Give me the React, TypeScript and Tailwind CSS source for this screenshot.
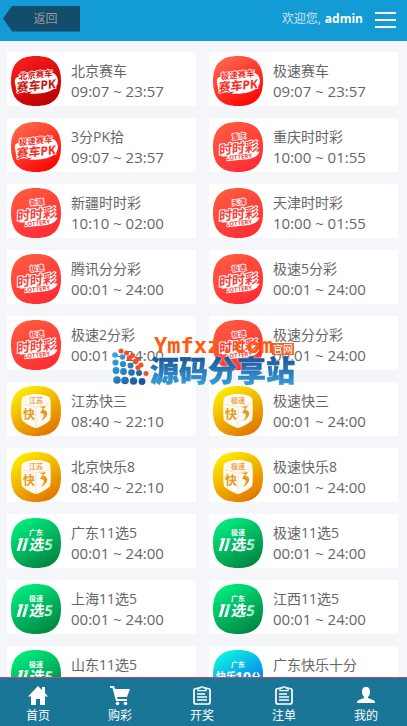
import React from 'react';

type Kind = 'pk' | 'pkDark' | 'ssc' | 'k3' | 'x5' | 'kl10';

interface Lottery {
  name: string;
  time: string;
  kind: Kind;
  label: string;
}

const lotteries: Lottery[] = [
  { name: '北京赛车', time: '09:07 ~ 23:57', kind: 'pkDark', label: '北京赛车' },
  { name: '极速赛车', time: '09:07 ~ 23:57', kind: 'pk', label: '极速赛车' },
  { name: '3分PK拾', time: '09:07 ~ 23:57', kind: 'pk', label: '极速赛车' },
  { name: '重庆时时彩', time: '10:00 ~ 01:55', kind: 'ssc', label: '重庆' },
  { name: '新疆时时彩', time: '10:10 ~ 02:00', kind: 'ssc', label: '新疆' },
  { name: '天津时时彩', time: '10:00 ~ 01:55', kind: 'ssc', label: '天津' },
  { name: '腾讯分分彩', time: '00:01 ~ 24:00', kind: 'ssc', label: '极速' },
  { name: '极速5分彩', time: '00:01 ~ 24:00', kind: 'ssc', label: '极速' },
  { name: '极速2分彩', time: '00:01 ~ 24:00', kind: 'ssc', label: '极速' },
  { name: '极速分分彩', time: '00:01 ~ 24:00', kind: 'ssc', label: '极速' },
  { name: '江苏快三', time: '08:40 ~ 22:10', kind: 'k3', label: '江苏' },
  { name: '极速快三', time: '00:01 ~ 24:00', kind: 'k3', label: '极速' },
  { name: '北京快乐8', time: '08:40 ~ 22:10', kind: 'k3', label: '江苏' },
  { name: '极速快乐8', time: '00:01 ~ 24:00', kind: 'k3', label: '极速' },
  { name: '广东11选5', time: '00:01 ~ 24:00', kind: 'x5', label: '广东' },
  { name: '极速11选5', time: '00:01 ~ 24:00', kind: 'x5', label: '极速' },
  { name: '上海11选5', time: '00:01 ~ 24:00', kind: 'x5', label: '极速' },
  { name: '江西11选5', time: '00:01 ~ 24:00', kind: 'x5', label: '广东' },
  { name: '山东11选5', time: '00:01 ~ 24:00', kind: 'x5', label: '极速' },
  { name: '广东快乐十分', time: '00:01 ~ 24:00', kind: 'kl10', label: '广东' },
];

const gradients: Record<Kind, [string, string]> = {
  pkDark: ['#fb1d1d', '#b80000'],
  pk: ['#ff6a50', '#ff0000'],
  ssc: ['#ff5c40', '#ff2a34'],
  k3: ['#fff000', '#e07000'],
  x5: ['#00f080', '#008040'],
  kl10: ['#10f8e0', '#0060f0'],
};

const squircle = 'M25 0C42 0 50 8 50 25S42 50 25 50 0 42 0 25 8 0 25 0Z';

const LotteryIcon: React.FC<{ kind: Kind; label: string }> = ({ kind, label }) => {
  const [from, to] = gradients[kind];
  const red = kind === 'pkDark' ? '#d01010' : '#fa2a22';

  return (
    <svg viewBox="0 0 50 50" className="h-[50px] w-[50px] shrink-0 font-bold" textAnchor="middle" aria-hidden="true">
      <defs>
        <linearGradient id={`fill-${kind}`} x1="0.2" y1="0" x2="0.8" y2="1">
          <stop offset="0" stopColor={from} />
          <stop offset="1" stopColor={to} />
        </linearGradient>
        <linearGradient id="fade" x1="0" y1="0" x2="1" y2="0">
          <stop offset="0" stopColor="#fff" />
          <stop offset="0.6" stopColor="#fff" />
          <stop offset="1" stopColor="#7fe0a8" />
        </linearGradient>
      </defs>
      <path d={squircle} fill={`url(#fill-${kind})`} />

      {(kind === 'pk' || kind === 'pkDark') && (
        <g transform="rotate(-6 25 25)" fill={red} stroke="#fff" paintOrder="stroke" strokeLinejoin="round">
          <path d="M4 26C3 18 8 20 10 18H40C48 19 49 30 43 34 36 39 24 38 17 37L20 35H5Z" fill="#fff" stroke="none" />
          <text x="28" y="22" fontSize="8.500" strokeWidth="1.500" transform="skewX(-8)">{label}</text>
          <text x="29" y="34" fontSize="12" strokeWidth="1.500" transform="skewX(-8)">赛车PK</text>
        </g>
      )}

      {kind === 'ssc' && (
        <g transform="rotate(-6 25 25)" fill="#fc4038" stroke="#fff" paintOrder="stroke" strokeLinejoin="round">
          <path d="M8 22H44L42 31 46 32C43 37 39 37 35 38H12V33H8Z" fill="#fff" stroke="none" />
          <text x="27" y="17" fontSize="7" strokeWidth="1.500">{label}</text>
          <text x="29" y="31" fontSize="13" strokeWidth="2" transform="skewX(-8)">时时彩</text>
          <text x="25" y="37" fontSize="6" stroke="none">LOTTERY</text>
        </g>
      )}

      {kind === 'k3' && (
        <g>
          <path d="M25 8C31 8 38 10 39 12S40 32 39 34 28 42 25 42 12 36 11 34 10 14 11 12 19 8 25 8Z" fill="#fffaf2" />
          <path d="M12 18L25 21 38 18M25 21V42" fill="none" stroke="#fbe4c8" />
          <text x="25" y="17" fontSize="7" fill="#f0a050">{label}</text>
          <text x="18" y="33" fontSize="12" fill="#e59a18">快</text>
          <path d="M28 21L35 20 32 24C38 24 38 31 30 35 34 30 34 27 29 27L32 22Z" fill="#e59a18" />
        </g>
      )}

      {kind === 'x5' && (
        <g fill="#fff">
          <text x="25" y="17" fontSize="7">{label}</text>
          <g fill="url(#fade)">
            <path d="M9 20H12.500L8.500 33H5.500L8.700 22H7ZM15 20H18L14 33H11L14.300 22H13Z" />
            <text x="35" y="32" fontSize="15" transform="skewX(-10)">选5</text>
          </g>
        </g>
      )}

      {kind === 'kl10' && (
        <g fill="#fff">
          <text x="25" y="17" fontSize="7">{label}</text>
          <text x="13" y="30" fontSize="10">快乐</text>
          <text x="30" y="32" fontSize="14">10</text>
          <text x="43" y="30" fontSize="9">分</text>
        </g>
      )}
    </svg>
  );
};

const HomeIcon = () => (
  <svg viewBox="0 0 20 20" className="h-5 w-5" fill="currentColor" aria-hidden="true">
    <path d="M10 0L0 10.500H3V19H8V13H12V19H17V10.500H20L17 7V1H14V4Z" />
  </svg>
);

const CartIcon = () => (
  <svg viewBox="0 0 20 20" className="h-5 w-5" fill="currentColor" aria-hidden="true">
    <path d="M0 0H4L5 3H20L17 11H7L7.500 13H17V15H6L2.500 2H0Z" />
    <circle cx="7.500" cy="17.500" r="1.800" />
    <circle cx="15.500" cy="17.500" r="1.800" />
  </svg>
);

const ClipboardIcon = () => (
  <svg viewBox="0 0 20 20" className="h-5 w-5" fill="none" stroke="currentColor" aria-hidden="true">
    <rect x="2" y="2.500" width="16" height="15.500" rx="2" strokeWidth="1.700" />
    <path d="M6 4.700V2H8C8 0.500 12 0.500 12 2H14V4.700Z" fill="#1a7697" strokeWidth="1.300" />
    <path d="M5 8H13M5 11H15M5 14H15" strokeWidth="1.300" />
  </svg>
);

const UserIcon = () => (
  <svg viewBox="0 0 20 20" className="h-5 w-5" fill="currentColor" aria-hidden="true">
    <path d="M10 1C13 1 14 3 14 6 14 8 13 10 12 11V12L17 14C18.500 14.500 19 15 19 17H1C1 15 1.500 14.500 3 14L8 12V11C7 10 6 8 6 6 6 3 7 1 10 1Z" />
  </svg>
);

const navItems = [
  { label: '首页', icon: <HomeIcon /> },
  { label: '购彩', icon: <CartIcon /> },
  { label: '开奖', icon: <ClipboardIcon /> },
  { label: '注单', icon: <ClipboardIcon /> },
  { label: '我的', icon: <UserIcon /> },
];

// x, y, radius
const orangeDots = [
  [10, 15, 2.5], [15.5, 17, 2.5], [21.5, 19.500, 2.5], [27, 23, 2.3],
  [18.5, 22, 2.8], [24.5, 25.500, 2.8], [30, 29, 2.5],
  [27, 31.500, 2.6], [35, 37.500, 2.5],
];
const blueDots = [
  [4, 19, 2.8], [11.5, 21, 2.8],
  [4.500, 26.500, 3.1], [12, 28, 3.1], [19.500, 29.500, 3],
  [5, 34.500, 3.4], [12.500, 35.500, 3.4], [20.500, 36.500, 3.3], [28, 37, 3],
  [6, 44, 3.8], [14, 44.500, 3.8], [22.500, 45, 3.7], [31, 45.500, 3.4],
];

const Watermark = () => (
  <svg viewBox="0 0 186 56" className="pointer-events-none absolute left-[111px] top-[336px] h-14 w-[186px]" aria-label="Ymfxz.com 源码分享站">
    <defs>
      <linearGradient id="wm" x1="0" y1="0" x2="0" y2="1">
        <stop offset="0.2" stopColor="#1c5c9c" />
        <stop offset="0.9" stopColor="#38a0dc" />
      </linearGradient>
      <linearGradient id="dots" gradientUnits="userSpaceOnUse" x1="4" y1="20" x2="30" y2="48">
        <stop offset="0" stopColor="#2fa8e0" />
        <stop offset="1" stopColor="#1c5390" />
      </linearGradient>
    </defs>
    {blueDots.map(([x, y, r]) => (
      <circle key={`${x}-${y}`} cx={x} cy={y} r={r} fill="url(#dots)" />
    ))}
    {orangeDots.map(([x, y, r]) => (
      <circle key={`${x}-${y}`} cx={x} cy={y} r={r} fill="#f05028" />
    ))}
    <text x="39" y="46" fontSize="29" fontWeight="900" fill="url(#wm)" stroke="url(#wm)" strokeWidth="0.5" className="drop-shadow-[0_0_1px_#fff]">源码分享站</text>
    <text x="43" y="17" fontSize="22" fontWeight="700" fill="#ff5a10" className="font-['DejaVu_Sans_Mono',monospace]">Ymfxz.com</text>
    <rect x="161" y="7" width="22" height="12" fill="#f4602c" />
    <text x="162" y="17" fontSize="10" fill="#fff">官网</text>
  </svg>
);

const App: React.FC = () => {
  return (
    <div className="relative flex h-screen flex-col overflow-hidden bg-[#f4f6f9] font-['Open_Sans','Noto_Sans_CJK_SC',sans-serif] text-[#666]">
      {/* Header */}
      <header className="flex h-[41px] shrink-0 items-center justify-between bg-[#139bd5] pl-[3px] pr-[11px]">
        <a
          href="#back"
          className="mb-1 flex h-[26px] w-[77px] items-center justify-center bg-[#134d6b] pl-2 text-xs text-[#999] [clip-path:polygon(0_50%,12%_0,100%_0,100%_100%,12%_100%)]"
        >
          返回
        </a>
        <div className="flex items-center gap-3 text-xs text-[#d5e3ea]">
          <p className="mb-1 flex gap-1">
            <span>欢迎您,</span>
            <strong className="text-white">admin</strong>
          </p>
          <button type="button" aria-label="菜单" className="mb-px flex w-[21px] flex-col gap-[5px]">
            <span className="h-[2px] bg-white"></span>
            <span className="h-[2px] bg-white"></span>
            <span className="h-[2px] bg-white"></span>
          </button>
        </div>
      </header>

      {/* Lottery list */}
      <main className="min-h-0 flex-1 overflow-y-auto pt-[11px] pr-[9px] pb-3 pl-[7px] [scrollbar-width:none]">
        <ul className="grid grid-cols-2 gap-x-[13px] gap-y-3">
          {lotteries.map((item) => (
            <li key={item.name}>
              <a href="#bet" className="flex h-[54px] gap-[10px] bg-white pt-1 pl-1">
                <LotteryIcon kind={item.kind} label={item.label} />
                <div className="pt-1">
                  <h3 className="text-sm leading-[21px]">{item.name}</h3>
                  <p className="text-[15px] leading-[21px]">{item.time}</p>
                </div>
              </a>
            </li>
          ))}
        </ul>
      </main>

      {/* Bottom navigation */}
      <nav className="shrink-0 border-t border-[#c8466c] bg-[#1a7697] text-white">
        <ul className="-ml-[3px] grid h-12 grid-cols-5">
          {navItems.map((item) => (
            <li key={item.label}>
              <a href="#nav" className="flex flex-col items-center pt-2 text-xs leading-5">
                {item.icon}
                <span>{item.label}</span>
              </a>
            </li>
          ))}
        </ul>
      </nav>

      <Watermark />
    </div>
  );
};

export default App;
